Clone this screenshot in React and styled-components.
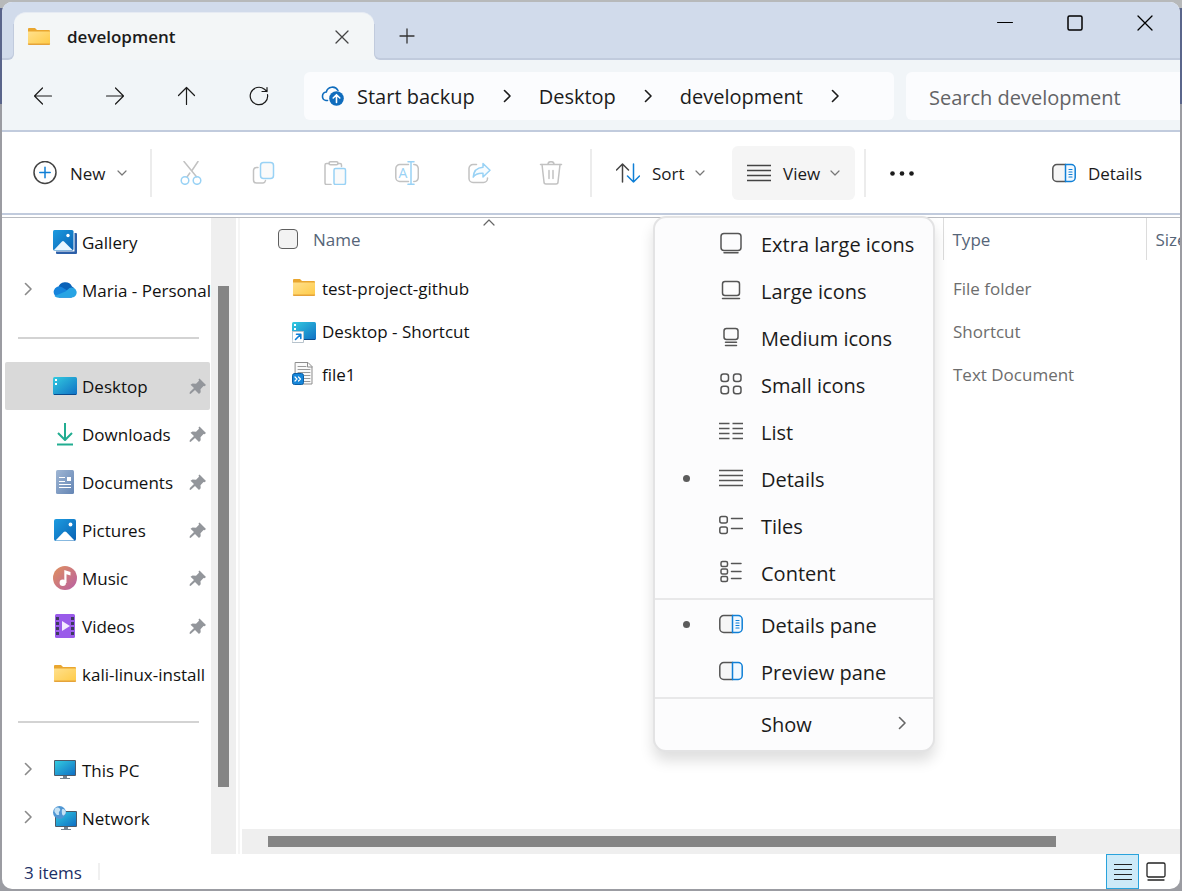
import React, { useState } from "react";
import styled, { createGlobalStyle, css } from "styled-components";

const ink = "#1b1b1b";
const edge = "#c1cbdd";
const blue = "#0f7fd6";
const softGray = "#c2c2c2";
const softBlue = "#99d2f5";

const GlobalStyle = createGlobalStyle`
  *, *::before, *::after { box-sizing: border-box; }
  body {
    margin: 0;
    color: ${ink};
    font-family: "Open Sans", "Noto Sans", sans-serif;
    font-size: 17px;
    line-height: 24px;
    background: linear-gradient(#b7b9ba 0 8px, #5a658b 8px 104px, #9b9ca2 104px);
  }
  button, input { font: inherit; color: inherit; }
  button { border: 0; padding: 0; background: none; }
`;

/* ---------- window shell ---------- */

const Window = styled.div`
  display: flex;
  flex-direction: column;
  min-height: calc(100vh - 4px);
  margin: 2px;
  overflow: hidden;
  border-radius: 10px;
  background: #fff;
`;

const Label = styled.span`
  display: inline-block;
  padding-top: 2px;
  white-space: nowrap;
`;

const TitleBar = styled.header`
  display: flex;
  height: 58px;
  background: linear-gradient(#d1dbeb 0 50px, #f2f6f8 50px);
`;

/* The strip's lower edge curves up into the side of the tab. */
const TitleStrip = styled.div`
  position: relative;
  isolation: isolate;
  &::before {
    content: "";
    position: absolute;
    z-index: -1;
    inset: 22px 0 0 0;
    background: #d1dbeb;
    border: 0 solid ${edge};
    border-bottom-width: 2px;
  }
`;

const TitleStart = styled(TitleStrip)`
  width: 12px;
  &::before {
    border-right-width: 1px;
    border-bottom-right-radius: 6px;
  }
`;

const TitleRest = styled(TitleStrip)`
  display: flex;
  flex: 1;
  align-items: flex-start;
  &::before {
    border-left-width: 1px;
    border-bottom-left-radius: 6px;
  }
`;

const Tab = styled.div`
  display: flex;
  align-items: center;
  width: 360px;
  height: 48px;
  margin-top: 10px;
  padding: 0 12px 0 13px;
  gap: 15px;
  background: #f3f6f7;
  border-top: 1px solid #e6ebf3;
  border-radius: 12px 12px 0 0;
  font-weight: 600;
`;

const TabTitle = styled.span`
  flex: 1;
  padding-left: 1px;
`;

const IconButton = styled.button`
  display: flex;
  align-items: center;
  justify-content: center;
  width: ${(p) => p.$w || 72}px;
  height: ${(p) => p.$h || 48}px;
`;

const Controls = styled.div`
  display: flex;
  margin-left: auto;
`;

/* ---------- address row ---------- */

const AddressRow = styled.div`
  display: flex;
  align-items: center;
  height: 72px;
  padding: 2px 0 0 5px;
  background: #f1f5f8;
  border-bottom: 2px solid ${edge};
`;

const AddressBox = styled.nav`
  display: flex;
  flex: 1;
  align-items: center;
  height: 48px;
  margin: 0 12px 0 9px;
  padding-left: 17px;
  border-radius: 6px;
  background: #fbfcfe;
  font-size: 20px;
`;

const Crumb = styled.a`
  padding-top: 2px;
  color: ${ink};
  text-decoration: none;
  white-space: nowrap;
`;

const CrumbArrow = styled.span`
  display: flex;
  justify-content: center;
  width: 64px;
`;

const BackupMark = styled.span`
  display: flex;
  width: 36px;
`;

const SearchBox = styled.input`
  width: 274px;
  height: 48px;
  padding: 2px 23px 0;
  border: 0;
  border-radius: 6px 0 0 6px;
  background: #fbfcfe;
  font-size: 20px;
  &::placeholder { color: #636466; opacity: 1; }
`;

/* ---------- command bar ---------- */

const CommandBar = styled.div`
  display: flex;
  align-items: center;
  height: 83px;
  border-bottom: 2px solid ${edge};
`;

const Command = styled.button`
  display: flex;
  align-items: center;
  height: 54px;
  padding: 0 15px;
  gap: ${(p) => p.$gap || 12}px;
  border-radius: 6px;
  background: ${(p) => (p["aria-expanded"] ? "#f5f5f5" : "transparent")};
`;

const Caret = styled.span`
  display: flex;
  margin-left: -2px;
`;

const Rule = styled.span`
  width: 2px;
  height: 48px;
  background: #ececec;
`;

const CommandGroup = styled.div`
  display: flex;
  align-items: center;
  width: ${(p) => p.$w}px;
  padding-left: ${(p) => p.$pad}px;
`;

const ViewGroup = styled.div`
  position: relative;
  margin-right: 9px;
`;

const DetailsToggle = styled.div`
  margin-left: auto;
  padding-right: 23px;
`;

/* ---------- view menu ---------- */

const Menu = styled.div`
  position: absolute;
  z-index: 2;
  top: 70px;
  left: -79px;
  width: 282px;
  padding: 3px 0 2px;
  border: 2px solid #e3e3e4;
  border-radius: 13px;
  background: #fcfcfd;
  box-shadow: 0 9px 14px rgba(0, 0, 0, 0.13);
`;

const MenuItem = styled.button`
  display: grid;
  grid-template-columns: 62px 28px 1fr 62px;
  align-items: center;
  justify-items: center;
  width: 100%;
  height: 47px;
  padding-bottom: 2px;
  font-size: 20px;
`;

const MenuLabel = styled(Label)`
  justify-self: start;
  padding: 4px 0 0 16px;
`;

const MenuRule = styled.div`
  height: 2px;
  margin: 1px 0 2px;
  background: #e8e8e9;
`;

const Bullet = styled.span`
  width: 7px;
  height: 7px;
  border-radius: 50%;
  background: ${(p) => (p.$on ? "#5c5c5c" : "transparent")};
`;

/* ---------- body ---------- */

const Body = styled.div`
  display: flex;
  flex: 1;
  margin-top: 2px;
  border-top: 1px solid #b9bbc0;
`;

const Sidebar = styled.nav`
  width: 209px;
  padding: 0 1px 0 3px;
`;

const Place = styled.a`
  display: grid;
  grid-template-columns: 46px 28px 1fr auto;
  align-items: center;
  justify-items: center;
  height: 48px;
  padding-right: 2px;
  border-radius: 2px;
  color: #111;
  text-decoration: none;
  background: ${(p) => (p["aria-current"] ? "#d9d9d9" : "transparent")};
`;

const PlaceName = styled(Label)`
  justify-self: start;
  padding-left: 3px;
`;

const PlaceRule = styled.div`
  display: flex;
  align-items: center;
  height: 48px;
  padding: 0 11px 0 13px;
  &::before {
    content: "";
    flex: 1;
    height: 2px;
    background: #d3d3d3;
  }
`;

const Track = styled.div`
  display: flex;
  background: #efefef;
  ${(p) =>
    p.$vertical
      ? css`
          width: 25px;
          padding: 68px 7px 67px;
        `
      : css`
          height: 25px;
          padding: 7px 124px 7px 26px;
        `}
`;

const Thumb = styled.div`
  flex: 1;
  background: #858585;
`;

const Pane = styled.main`
  display: flex;
  flex: 1;
  flex-direction: column;
  justify-content: space-between;
  min-width: 0;
  margin-left: 2px;
  padding-left: 2px;
  border-left: 2px solid #f5f5f5;
`;

const FileTable = styled.table`
  width: 100%;
  table-layout: fixed;
  border-collapse: collapse;
`;

const HeadCell = styled.th`
  position: relative;
  height: 42px;
  padding: 0 0 0 9px;
  overflow: hidden;
  border-left: ${(p) => (p.$line ? "1px solid #dcdcdc" : "0")};
  color: #566578;
  font-weight: 400;
  text-align: left;
  white-space: nowrap;
`;

const HeadSpacer = styled.tr`
  height: 6px;
`;

const NameHead = styled.label`
  display: flex;
  align-items: center;
  gap: 15px;
  padding-left: 27px;
`;

const Tick = styled.input`
  appearance: none;
  width: 20px;
  height: 20px;
  margin: 0;
  border: 1px solid #5f5f5f;
  border-radius: 4px;
  background: #f3f3f3;
`;

const SortMark = styled.span`
  position: absolute;
  top: 0;
  left: 0;
  right: 0;
  display: flex;
  justify-content: center;
`;

const Cell = styled.td`
  height: 43px;
  padding: 0 0 0 10px;
  color: #6d6d6d;
  white-space: nowrap;
`;

const FileName = styled.span`
  display: flex;
  align-items: center;
  gap: 6px;
  padding-left: 40px;
  color: #111;
`;

/* ---------- status bar ---------- */

const StatusBar = styled.footer`
  display: flex;
  align-items: center;
  height: 35px;
  padding-left: 22px;
  color: #1b2f66;
`;

const StatusRule = styled.span`
  width: 2px;
  height: 17px;
  margin-left: 16px;
  background: #f0f0f0;
`;

const StatusViews = styled.div`
  display: flex;
  margin-left: auto;
  padding-right: 8px;
`;

const StatusView = styled.button`
  display: flex;
  align-items: center;
  justify-content: center;
  width: 33px;
  height: 35px;
  border: 1px solid ${(p) => (p["aria-pressed"] ? "#29a3dc" : "transparent")};
  background: ${(p) => (p["aria-pressed"] ? "#cdeaf8" : "transparent")};
`;

/* ---------- icons ---------- */

const Icon = ({ size = 24, w, h, color = "#555", sw = 1.5, children }) => (
  <svg
    width={w || size}
    height={h || size}
    viewBox={`0 0 ${w || size} ${h || size}`}
    fill="none"
    stroke={color}
    strokeWidth={sw}
    strokeLinecap="round"
    strokeLinejoin="round"
    aria-hidden="true"
  >
    {children}
  </svg>
);

const Chevron = ({ color = ink, sw = 1.6 }) => (
  <Icon w={8} h={14} color={color} sw={sw}><path d="M1.5 1.5 7 7l-5.500 5.500" /></Icon>
);
const Down = () => (
  <Icon w={10} h={6} color="#777" sw={1.200}><path d="M1 1l4 4 4-4" /></Icon>
);
const CloseX = ({ size = 14, color = "#333" }) => (
  <Icon size={size} color={color} sw={1.300}><path d={`M1 1l${size - 2} ${size - 2}M${size - 1} 1L1 ${size - 1}`} /></Icon>
);
const Lines = ({ color = "#555" }) => (
  <Icon color={color}><path strokeLinecap="butt" d="M0 4.500h24M0 9.500h24M0 14.500h24M0 19.500h24" /></Icon>
);
const PaneIcon = ({ text }) => (
  <Icon>
    <path d="M13.500 3.500H4.500a4 4 0 0 0-4 4v9a4 4 0 0 0 4 4h9" transform="translate(.3 0)" fill="#f6f6f6" />
    <path d="M13.500 3.500h5.700a4 4 0 0 1 4 4v9a4 4 0 0 1-4 4h-5.700z" stroke={blue} fill="#f2f9ff" />
    {text && <path d="M17 8.500h3M17 11h3M17 13.500h3M17 16h3" stroke={blue} strokeWidth="1.200" />}
  </Icon>
);

const menuIcons = {
  xl: <Icon><rect x="2" y="2.500" width="20" height="17" rx="3" /><path d="M5 21.700h14" /></Icon>,
  lg: <Icon><rect x="3.500" y="3.500" width="17" height="14" rx="2.500" /><path d="M3.500 20.500h17" /></Icon>,
  md: <Icon><rect x="5" y="3.500" width="14" height="11" rx="2.500" /><path d="M6.500 17.300h11M6.500 20.500h11" /></Icon>,
  sm: (
    <Icon>
      <rect x="2" y="2" width="7.500" height="7.500" rx="2.500" /><rect x="14.500" y="2" width="7.500" height="7.500" rx="2.500" />
      <rect x="2" y="14.200" width="7.500" height="7.500" rx="2.500" /><rect x="14.500" y="14.200" width="7.500" height="7.500" rx="2.500" />
    </Icon>
  ),
  list: (
    <Icon>
      <path strokeLinecap="butt" d="M0 4.500h10.500M0 9.500h10.500M0 14.500h10.500M0 19.500h10.500M13.500 4.500H24M13.500 9.500H24M13.500 14.500H24M13.500 19.500H24" />
    </Icon>
  ),
  details: <Lines />,
  tiles: (
    <Icon>
      <rect x="0.800" y="3.500" width="7.500" height="6.500" rx="2" /><rect x="0.800" y="14" width="7.500" height="6.500" rx="2" />
      <path d="M12.500 5.500h11M12.500 15.500h11" />
    </Icon>
  ),
  content: (
    <Icon>
      <rect x="2" y="1.500" width="6.500" height="5" rx="1.500" /><rect x="2" y="9" width="6.500" height="5" rx="1.500" />
      <rect x="2" y="16.500" width="6.500" height="5" rx="1.500" />
      <path d="M12.500 3.500h9.500M12.500 11.500h9.500M12.500 18.500h9.500" />
    </Icon>
  ),
  detailsPane: <PaneIcon text />,
  previewPane: <PaneIcon />,
};

const FolderIcon = () => (
  <Icon color="none">
    <path d="M1 4a1 1 0 0 1 1-1h6l2 2h12a1 1 0 0 1 1 1V9H1z" fill="#e9a62f" />
    <path d="M1 6.500h22v12a1 1 0 0 1-1 1H2a1 1 0 0 1-1-1z" fill="url(#folderFace)" />
    <path d="M1 18.500h22a1 1 0 0 1-1 1.500H2A1 1 0 0 1 1 18.500z" fill="#e5a33a" />
  </Icon>
);

const DesktopIcon = ({ shortcut }) => (
  <Icon color="none">
    <rect x="0" y="3" width="24" height="18" rx="1.500" fill="url(#screen)" />
    <path d="M1 20h22v1H1z" fill="#0a4a8c" />
    <path d="M2 5h2v2H2zM2 9h2v2H2z" fill="#fff" />
    {shortcut && (
      <>
        <rect x="0.500" y="12.500" width="11" height="11" fill="#fff" stroke="#b7c3cc" strokeWidth="1" />
        <path d="M3.500 20.500 8.500 15.500M4.500 15.200h4.300v4.300" stroke="#0f7fd6" strokeWidth="1.600" />
      </>
    )}
  </Icon>
);

const placeIcons = {
  gallery: (
    <Icon color="none">
      <path d="M21.500 3H23a1 1 0 0 1 1 1v19a1 1 0 0 1-1 1H4a1 1 0 0 1-1-1v-1.500h18.500z" fill="#2c5fa8" />
      <rect x="0" y="0" width="20.500" height="20.500" rx="1.500" fill="url(#photo)" />
      <path d="M1 20 9 11.500a1.500 1.500 0 0 1 2 0L19.500 20z" fill="#e9f6ff" />
      <circle cx="15" cy="5.500" r="1.700" fill="#fff" />
    </Icon>
  ),
  cloud: (
    <Icon color="none">
      <path d="M5 10a7.500 7.500 0 0 1 14-1.500 6 6 0 0 1-1 11H6z" fill="#0a62b8" />
      <path d="M6 19.500A5.500 5.500 0 1 1 9 9.300l12.500 7.700-3 2.500z" fill="#1583dc" />
      <path d="M12.500 13.500l4-3.500a5 5 0 1 1 2.500 9.500H5.500a5.500 5.500 0 0 1-4-1.500z" fill="#28a4e4" />
    </Icon>
  ),
  desktop: <DesktopIcon />,
  downloads: (
    <Icon color="#22ad91" sw={2}><path strokeLinecap="butt" d="M12 1v16M5 11l7 7 7-7M4 22.500h16" /></Icon>
  ),
  documents: (
    <Icon color="none">
      <rect x="3" y="0" width="18" height="24" rx="1.500" fill="url(#doc)" />
      <path d="M6 7.500h6M6 11.500h6M6 14.500h12M6 17.500h12" stroke="#fff" strokeWidth="1.200" strokeLinecap="butt" />
      <path d="M14 7h4v4h-4z" fill="#fff" />
    </Icon>
  ),
  pictures: (
    <Icon color="none">
      <rect x="1" y="1" width="22" height="22" rx="2" fill="url(#photo)" />
      <path d="M2.500 22.500 10.700 14a2 2 0 0 1 2.600 0L21.500 22.500z" fill="#fff" />
      <circle cx="17.500" cy="6.500" r="1.900" fill="#fff" />
    </Icon>
  ),
  music: (
    <Icon color="none">
      <circle cx="12" cy="12" r="12" fill="url(#disc)" />
      <circle cx="9.800" cy="16.800" r="3.200" fill="#fff" />
      <path d="M11.300 17V4l6.200 2v3.500l-4-1.300V17z" fill="#fff" />
    </Icon>
  ),
  videos: (
    <Icon color="none">
      <rect x="2" y="0" width="20" height="24" rx="1.500" fill="#9a5bea" />
      <path
        d="M3 3h3v3H3zM3 8h3v3H3zM3 13h3v3H3zM3 18h3v3H3zM18 3h3v3h-3zM18 8h3v3h-3zM18 13h3v3h-3zM18 18h3v3h-3z"
        fill="#3d3a60"
      />
      <path d="M9 7v10l8-5z" fill="#f3eaff" />
    </Icon>
  ),
  folder: <FolderIcon />,
  pc: (
    <Icon color="none">
      <rect x="1" y="2" width="22" height="16" rx="1" fill="#4d5a69" />
      <rect x="2" y="3" width="20" height="14" fill="url(#screen)" />
      <path d="M10 18h4v2h3v1H7v-1h3z" fill="#76838f" />
    </Icon>
  ),
  network: (
    <Icon color="none">
      <rect x="2" y="5" width="22" height="16" rx="1" fill="#4d5a69" />
      <rect x="3" y="6" width="20" height="14" fill="url(#screen)" />
      <path d="M11 21h4v2h3v1H8v-1h3z" fill="#76838f" />
      <circle cx="6.500" cy="6.500" r="6.500" fill="#4f96d3" />
      <path d="M2 2.500c2-1.500 4-1 5 .5S5 6 6 7.500 4 10 3 8 .5 6 2 2.500zM9 3.500c1.500-1 2.500 0 3.500 1.500s-.5 4-2 4.500-2-4-1.500-6z" fill="#c6e2f4" />
    </Icon>
  ),
};

const PinIcon = () => (
  <Icon size={20} color="none">
    <path d="M11.500 2.500 18 9l-1.500 1.200-1-.2-3 3.300.2 3L11 18l-4-4-4.500 4-1-.4.400-1.600L6 12 2.500 8.800 4.500 7.500l3.500.2 3-3-.5-1.200z" fill="#93969b" />
  </Icon>
);

const TextFileIcon = () => (
  <Icon color="none">
    <path d="M3.500.500H16L20 4.500v17.500h-16.500z" fill="#fafafa" stroke="#8d8d8d" strokeWidth="1" />
    <path d="M15.500.500V5h4.500" stroke="#8d8d8d" strokeWidth="1" />
    <path d="M6 4.500h8M6 7.500h12M6 10.500h12M12 13.500h6M12 16.500h6M12 19.500h6" stroke="#9a9a9a" strokeWidth="1" />
    <rect x="0.500" y="11.500" width="11" height="11" rx="2" fill="#1686d9" stroke="#0b5ea5" strokeWidth="1" />
    <path d="m3 15 2 2-2 2M6.500 15l2 2-2 2" stroke="#fff" strokeWidth="1.200" />
  </Icon>
);

const Defs = styled.svg`
  position: absolute;
`;

const Gradients = () => (
  <Defs width="0" height="0" aria-hidden="true">
    <defs>
      <linearGradient id="folderFace" x1="0" y1="0" x2="1" y2="1">
        <stop offset="0" stopColor="#ffe08c" /><stop offset="1" stopColor="#ffcb47" />
      </linearGradient>
      <linearGradient id="screen" x1="0" y1="0" x2="1" y2="1">
        <stop offset="0" stopColor="#33cbe0" /><stop offset="1" stopColor="#0f6fc4" />
      </linearGradient>
      <linearGradient id="photo" x1="0" y1="0" x2="1" y2="1">
        <stop offset="0" stopColor="#1c9be0" /><stop offset="1" stopColor="#0a63b4" />
      </linearGradient>
      <linearGradient id="doc" x1="0" y1="0" x2="1" y2="1">
        <stop offset="0" stopColor="#9fb6d4" /><stop offset="1" stopColor="#6485b4" />
      </linearGradient>
      <linearGradient id="disc" x1="0" y1="0" x2="1" y2="1">
        <stop offset="0" stopColor="#e0915c" /><stop offset="1" stopColor="#b85fa5" />
      </linearGradient>
    </defs>
  </Defs>
);

const nav = [
  ["Back", "M20.500 12H3.500M11.500 4l-8 8 8 8"],
  ["Forward", "M3.500 12h17M12.500 4l8 8-8 8"],
  ["Up", "M11.500 20.500v-17M3.500 11.500l8-8 8 8"],
  ["Refresh", "M20.500 10.500A8.700 8.700 0 1 1 17.500 5.300L20 7.500M15 7.500h5V3.500"],
];

const edits = [
  ["Cut", (
    <>
      <path d="M5 0.500 17.500 15.700M19 0.500 13.300 9M10.800 12 8.200 15.700" stroke={softGray} />
      <circle cx="6" cy="19.500" r="3.800" stroke={softBlue} /><circle cx="18" cy="19.500" r="3.800" stroke={softBlue} />
    </>
  )],
  ["Copy", (
    <>
      <path d="M7 6.500H5.500a3 3 0 0 0-3 3V19a3 3 0 0 0 3 3h6.500a3 3 0 0 0 2.500-2.500" stroke={softGray} />
      <rect x="9.500" y="1.500" width="13" height="16" rx="3" stroke={softBlue} fill="#fafafa" />
    </>
  )],
  ["Paste", (
    <>
      <path d="M6 2.500H3.500a1.500 1.500 0 0 0-1.500 1.500v18a1.500 1.500 0 0 0 1.500 1.500H8M15 2.500h2a1.500 1.500 0 0 1 1.500 1.500v1.500" stroke={softGray} />
      <rect x="6" y="0.800" width="9" height="3" rx="1.500" stroke={softGray} />
      <rect x="11" y="7.500" width="11.500" height="16" rx="1.500" stroke={softBlue} fill="#fafafa" />
    </>
  )],
  ["Rename", (
    <>
      <path d="M13.500 3.500h-8.700a4 4 0 0 0-4 4v9a4 4 0 0 0 4 4h8.700M18.800 3.500a4.500 4.500 0 0 1 4.500 4v9a4.500 4.500 0 0 1-4.500 4" stroke={softGray} />
      <path d="M16 .800v22.500M13 .800h6M13 23.300h6" stroke={softBlue} />
      <text x="3.500" y="17" fontSize="14" fill={softBlue} stroke="none">A</text>
    </>
  )],
  ["Share", (
    <>
      <path d="M9.500 3.500H6a4 4 0 0 0-4 4v10a4 4 0 0 0 4 4h10.500a4 4 0 0 0 4-4v-.5" stroke={softGray} />
      <path d="M16 2.500l7 6.800-7 6.700v-3.800c-5-.2-8 1-9.800 4 .3-6 4-9.600 9.800-10z" stroke={softBlue} fill="#f7fcff" />
    </>
  )],
  ["Delete", (
    <g stroke={softGray}>
      <path d="M1.500 3.500h21M9 3.200a3 2.500 0 0 1 6 0" />
      <path d="M3 3.500l2 17.500a2 2 0 0 0 2 2h10a2 2 0 0 0 2-2l2-17.500M10 9.500v8M14 9.500v8" />
    </g>
  )],
];

const viewItems = [
  [["Extra large icons", "xl"], ["Large icons", "lg"], ["Medium icons", "md"], ["Small icons", "sm"],
   ["List", "list"], ["Details", "details", true], ["Tiles", "tiles"], ["Content", "content"]],
  [["Details pane", "detailsPane", true], ["Preview pane", "previewPane"]],
];

const places = [
  { name: "Gallery", icon: "gallery" },
  { name: "Maria - Personal", icon: "cloud", expand: true },
  null,
  { name: "Desktop", icon: "desktop", pin: true, current: true },
  { name: "Downloads", icon: "downloads", pin: true },
  { name: "Documents", icon: "documents", pin: true },
  { name: "Pictures", icon: "pictures", pin: true },
  { name: "Music", icon: "music", pin: true },
  { name: "Videos", icon: "videos", pin: true },
  { name: "kali-linux-install", icon: "folder" },
  null,
  { name: "This PC", icon: "pc", expand: true },
  { name: "Network", icon: "network", expand: true },
];

const files = [
  ["test-project-github", "File folder", <FolderIcon />],
  ["Desktop - Shortcut", "Shortcut", <DesktopIcon shortcut />],
  ["file1", "Text Document", <TextFileIcon />],
];

export default function App() {
  const [open, setOpen] = useState(true);
  return (
    <>
      <GlobalStyle />
      <Gradients />
      <Window>
        <TitleBar>
          <TitleStart />
          <Tab>
            <FolderIcon />
            <TabTitle>development</TabTitle>
            <IconButton $w={40} aria-label="Close tab"><CloseX color="#444" /></IconButton>
          </Tab>
          <TitleRest>
            <IconButton $w={66} $h={68} aria-label="New tab">
              <Icon size={16} color="#333" sw={1.300}><path d="M8 1v14M1 8h14" /></Icon>
            </IconButton>
            <Controls>
              <IconButton $w={70} $h={42} aria-label="Minimize">
                <Icon size={16} color="#000" sw={1}><path d="M.5 7.500h15" /></Icon>
              </IconButton>
              <IconButton $w={70} $h={42} aria-label="Maximize">
                <Icon size={16} color="#000" sw={1.500}><rect x="1" y="1" width="14" height="14" rx="1.500" /></Icon>
              </IconButton>
              <IconButton $w={70} $h={42} aria-label="Close"><CloseX size={16} color="#000" /></IconButton>
            </Controls>
          </TitleRest>
        </TitleBar>

        <AddressRow>
          {nav.map(([label, d]) => (
            <IconButton key={label} aria-label={label}>
              <Icon color={ink} sw={1.200}><path d={d} /></Icon>
            </IconButton>
          ))}
          <AddressBox aria-label="Address">
            <BackupMark>
              <Icon color="#0f6cbd" sw={1.600}>
                <path d="M6.500 16.500H5a4.300 4.300 0 0 1 .3-8.500A6.300 6.300 0 0 1 17 6.500" />
                <circle cx="15.500" cy="14.500" r="7.300" fill="#0f6cbd" stroke="none" />
                <path d="M15.500 18.500v-7.500M12.200 14l3.300-3.300 3.300 3.300" stroke="#fff" />
              </Icon>
            </BackupMark>
            <Crumb href="#backup">Start backup</Crumb>
            <CrumbArrow><Chevron /></CrumbArrow>
            <Crumb href="#desktop">Desktop</Crumb>
            <CrumbArrow><Chevron /></CrumbArrow>
            <Crumb href="#development">development</Crumb>
            <CrumbArrow><Chevron /></CrumbArrow>
          </AddressBox>
          <SearchBox type="search" aria-label="Search development" placeholder="Search development" />
        </AddressRow>

        <CommandBar>
          <CommandGroup $w={148} $pad={16}>
            <Command $gap={13}>
              <Icon color="#444">
                <circle cx="12" cy="11.500" r="11" />
                <path d="M12 6.300v10.400M6.800 11.500h10.400" stroke={blue} />
              </Icon>
              <Label>New</Label><Caret><Down /></Caret>
            </Command>
          </CommandGroup>
          <Rule />
          <CommandGroup $w={438} $pad={3}>
            {edits.map(([label, art]) => (
              <IconButton key={label} aria-label={label}><Icon>{art}</Icon></IconButton>
            ))}
          </CommandGroup>
          <Rule />
          <CommandGroup $w={140} $pad={9}>
            <Command>
              <Icon color="#444">
                <path d="M6.500 21V3M.500 9l6-6 6 6" />
                <path d="M17.500 3v18M11.500 15l6 6 6-6" stroke={blue} />
              </Icon>
              <Label>Sort</Label><Caret><Down /></Caret>
            </Command>
          </CommandGroup>
          <ViewGroup>
            <Command aria-haspopup="menu" aria-expanded={open} onClick={() => setOpen(!open)}>
              <Lines color="#444" />
              <Label>View</Label><Caret><Down /></Caret>
            </Command>
            {open && (
              <Menu role="menu">
                {viewItems.map((group, i) => (
                  <React.Fragment key={i}>
                    {group.map(([label, icon, on]) => (
                      <MenuItem key={label} role="menuitemradio" aria-checked={!!on}>
                        <Bullet $on={on} />
                        {menuIcons[icon]}
                        <MenuLabel>{label}</MenuLabel>
                      </MenuItem>
                    ))}
                    <MenuRule />
                  </React.Fragment>
                ))}
                <MenuItem role="menuitem">
                  <span /><span />
                  <MenuLabel>Show</MenuLabel>
                  <Chevron color="#666" />
                </MenuItem>
              </Menu>
            )}
          </ViewGroup>
          <Rule />
          <IconButton aria-label="More">
            <Icon color="none">
              <g fill={ink}><circle cx="2.500" cy="12.500" r="2.300" /><circle cx="12" cy="12.500" r="2.300" /><circle cx="21.500" cy="12.500" r="2.300" /></g>
            </Icon>
          </IconButton>
          <DetailsToggle>
            <Command><PaneIcon text /><Label>Details</Label></Command>
          </DetailsToggle>
        </CommandBar>

        <Body>
          <Sidebar aria-label="Places">
            {places.map((p, i) =>
              p ? (
                <Place key={p.name} href="#place" aria-current={p.current ? "page" : undefined}>
                  <span>{p.expand && <Chevron color="#8a8a8a" />}</span>
                  {placeIcons[p.icon]}
                  <PlaceName>{p.name}</PlaceName>
                  {p.pin && <PinIcon />}
                </Place>
              ) : (
                <PlaceRule key={i} />
              )
            )}
          </Sidebar>
          <Track $vertical><Thumb /></Track>
          <Pane>
            <FileTable>
              <colgroup>
                <col />
                <col width="207" />
                <col width="203" />
                <col width="34" />
              </colgroup>
              <thead>
                <tr>
                  <HeadCell>
                    <SortMark><Icon w={12} h={8} color="#666" sw={1.200}><path d="M1 7l5-5 5 5" /></Icon></SortMark>
                    <NameHead><Tick type="checkbox" /><Label>Name</Label></NameHead>
                  </HeadCell>
                  <HeadCell as="td" />
                  <HeadCell $line><Label>Type</Label></HeadCell>
                  <HeadCell $line><Label>Size</Label></HeadCell>
                </tr>
              </thead>
              <tbody>
                <HeadSpacer />
                {files.map(([name, type, icon]) => (
                  <tr key={name}>
                    <Cell><FileName>{icon}<Label>{name}</Label></FileName></Cell>
                    <Cell />
                    <Cell><Label>{type}</Label></Cell>
                    <Cell />
                  </tr>
                ))}
              </tbody>
            </FileTable>
            <Track><Thumb /></Track>
          </Pane>
        </Body>

        <StatusBar>
          <Label>3 items</Label>
          <StatusRule />
          <StatusViews>
            <StatusView aria-label="Details view" aria-pressed={true}>
              <Icon w={20} h={20} color="#222" sw={1}><path strokeLinecap="butt" d="M1 2.500h18M1 7.500h18M1 12.500h18M1 17.500h18" /></Icon>
            </StatusView>
            <StatusView aria-label="Large icons view">
              <Icon w={20} h={20} color="#222" sw={1.300}><rect x="1" y="1" width="18" height="14" rx="1.500" /><path d="M2 18h16" /></Icon>
            </StatusView>
          </StatusViews>
        </StatusBar>
      </Window>
    </>
  );
}
